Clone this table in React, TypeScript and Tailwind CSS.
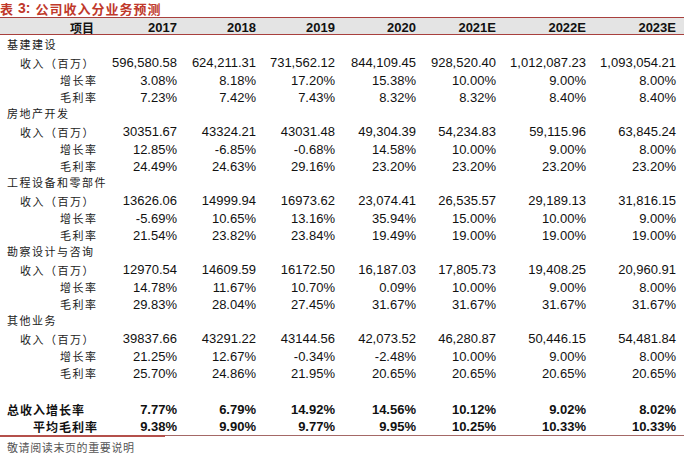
// Revenue-by-segment forecast table (broker research report style).

type Row = { label: string; indent: 'seg' | 'rev' | 'rate'; values?: string[] };

const cjk = '[font-family:"Noto_Sans_CJK_SC","Noto_Sans",sans-serif]';
const num = '[font-family:"Liberation_Sans",Arial,sans-serif]';
const cols = 'grid grid-cols-[98px_79px_79px_79px_81px_80px_90px_90px]';

const years = ['2017', '2018', '2019', '2020', '2021E', '2022E', '2023E'];

function section(name: string, rev: string[], growth: string[], margin: string[]): Row[] {
	return [
		{ label: name, indent: 'seg' },
		{ label: '收入（百万）', indent: 'rev', values: rev },
		{ label: '增长率', indent: 'rate', values: growth },
		{ label: '毛利率', indent: 'rate', values: margin },
	];
}

const rows: Row[] = [
	...section('基建建设',
		['596,580.58', '624,211.31', '731,562.12', '844,109.45', '928,520.40', '1,012,087.23', '1,093,054.21'],
		['3.08%', '8.18%', '17.20%', '15.38%', '10.00%', '9.00%', '8.00%'],
		['7.23%', '7.42%', '7.43%', '8.32%', '8.32%', '8.40%', '8.40%']),
	...section('房地产开发',
		['30351.67', '43324.21', '43031.48', '49,304.39', '54,234.83', '59,115.96', '63,845.24'],
		['12.85%', '-6.85%', '-0.68%', '14.58%', '10.00%', '9.00%', '8.00%'],
		['24.49%', '24.63%', '29.16%', '23.20%', '23.20%', '23.20%', '23.20%']),
	...section('工程设备和零部件',
		['13626.06', '14999.94', '16973.62', '23,074.41', '26,535.57', '29,189.13', '31,816.15'],
		['-5.69%', '10.65%', '13.16%', '35.94%', '15.00%', '10.00%', '9.00%'],
		['21.54%', '23.82%', '23.84%', '19.49%', '19.00%', '19.00%', '19.00%']),
	...section('勘察设计与咨询',
		['12970.54', '14609.59', '16172.50', '16,187.03', '17,805.73', '19,408.25', '20,960.91'],
		['14.78%', '11.67%', '10.70%', '0.09%', '10.00%', '9.00%', '8.00%'],
		['29.83%', '28.04%', '27.45%', '31.67%', '31.67%', '31.67%', '31.67%']),
	...section('其他业务',
		['39837.66', '43291.22', '43144.56', '42,073.52', '46,280.87', '50,446.15', '54,481.84'],
		['21.25%', '12.67%', '-0.34%', '-2.48%', '10.00%', '9.00%', '8.00%'],
		['25.70%', '24.86%', '21.95%', '20.65%', '20.65%', '20.65%', '20.65%']),
];

const totals = [
	{ label: '总收入增长率', pad: 'pl-[7px]', values: ['7.77%', '6.79%', '14.92%', '14.56%', '10.12%', '9.02%', '8.02%'] },
	{ label: '平均毛利率', pad: 'pl-[33px]', values: ['9.38%', '9.90%', '9.77%', '9.95%', '10.25%', '10.33%', '10.33%'] },
];

const indentCls = { seg: 'pl-[7px]', rev: 'pl-[20px]', rate: 'pl-[60px]' };

export default function App() {
	return (
		<div className="w-[700px] h-[473px] bg-white overflow-hidden text-[#111]">
			<div className={`h-[17px] flex items-center text-[13px] font-bold tracking-[1px] text-[#c0392b] ${cjk}`}>
				<span>表</span>
				<span className={`ml-[4px] mr-[5px] ${num} text-[14px] tracking-normal`}>3:</span>
				<span>公司收入分业务预测</span>
			</div>

			<div className="w-[684px]">
				{/* header band */}
				<div className={`${cols} h-[18px] items-center bg-[#e4e4e4] border-y border-[#a8403d] text-[13px] font-bold`}>
					<div className={`text-right pr-[4px] text-[12px] ${cjk}`}>项目</div>
					{years.map((y) => (
						<div key={y} className={`text-right ${num}`}>{y}</div>
					))}
				</div>

				<div className="pt-[1px]">
					{rows.map((r, i) => (
						<div key={i} className={`${cols} h-[17.25px] items-center`}>
							<div className={`${indentCls[r.indent]} text-[11px] tracking-[1.5px] whitespace-nowrap text-[#222] ${cjk}`}>{r.label}</div>
							{r.values?.map((v, j) => (
								<div key={j} className={`text-right text-[13px] ${num}`}>{v}</div>
							))}
						</div>
					))}
				</div>

				<div className="pt-[19px]">
					{totals.map((t) => (
						<div key={t.label} className={`${cols} h-[17px] items-center font-bold`}>
							<div className={`${t.pad} text-[12px] tracking-[1px] whitespace-nowrap ${cjk}`}>{t.label}</div>
							{t.values.map((v, j) => (
								<div key={j} className={`text-right text-[13px] ${num}`}>{v}</div>
							))}
						</div>
					))}
				</div>

				<div className="flex mt-[0.5px]">
					<div className="w-[165px] h-[2px] bg-[#b4504b]" />
					<div className="flex-1 h-px bg-[#a46866]" />
				</div>
			</div>

			<div className={`pl-[7px] pt-[2px] text-[11px] tracking-[0.6px] text-[#555] ${cjk}`}>敬请阅读末页的重要说明</div>
		</div>
	);
}
